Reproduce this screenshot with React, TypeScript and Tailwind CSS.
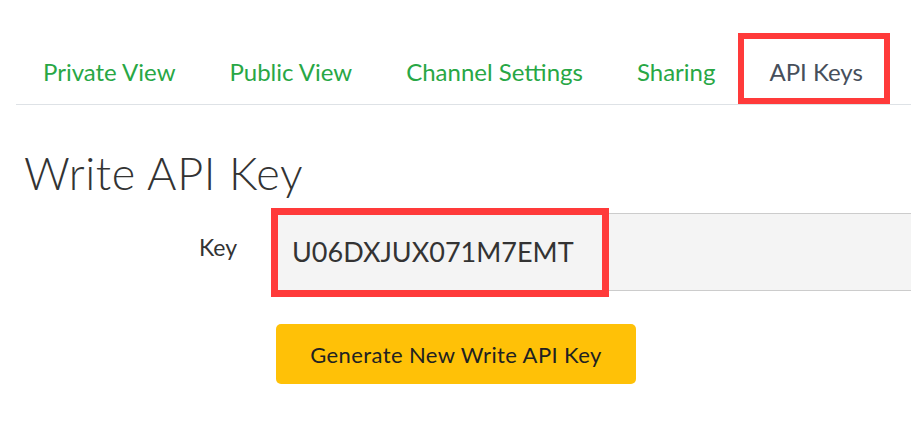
const tabs = ['Private View', 'Public View', 'Channel Settings', 'Sharing']

export default function App() {
  return (
    <div className="h-[438px] w-full overflow-hidden bg-white font-['Lato',sans-serif]">
      <nav className="ml-4 mt-10 flex border-b border-[#dee2e6]">
        {tabs.map((tab) => (
          <a key={tab} className="flex h-16 items-center px-[27px] text-[24px] text-[#28a745]">
            {tab}
          </a>
        ))}
        <a className="relative flex h-16 items-center px-[27px] text-[24px] text-[#474f5b]">
          API Keys
          <span className="absolute -top-[7px] bottom-0 -left-[4px] right-0 border-[6px] border-[#ff3a3a]" />
        </a>
      </nav>

      <section className="pl-6 pt-[41px]">
        <h1 className="text-[45px] font-light leading-[1.2] tracking-[0.6px] text-[#333]">Write API Key</h1>

        <div className="mt-[13px] flex items-start">
          <label className="w-[252px] shrink-0 pr-[39px] pt-[17px] text-right text-[23px] text-[#333]">Key</label>
          <div className="relative flex-1">
            <div className="flex h-[78px] items-center border-y border-[#cccccc] bg-[#f4f4f4] pl-4 text-[27px] text-[#333]">
              U06DXJUX071M7EMT
            </div>
            <span className="absolute -left-[5px] -top-[5px] h-[89px] w-[338px] border-[7px] border-[#ff3a3a]" />
          </div>
        </div>

        <button
          type="button"
          className="ml-[252px] mt-[33px] flex h-[60px] w-[360px] items-center justify-center rounded-[5px] bg-[#ffc107] text-[22px] tracking-[0.4px] text-[#212121]"
        >
          Generate New Write API Key
        </button>
      </section>
    </div>
  )
}
